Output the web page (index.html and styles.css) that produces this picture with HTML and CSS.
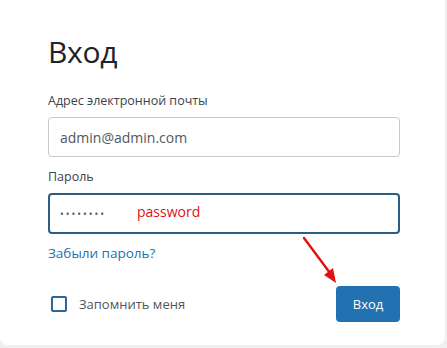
FILE: index.html
```html
<!DOCTYPE html>
<html lang="ru">
<head>
<meta charset="utf-8">
<link rel="stylesheet" href="styles.css">
</head>
<body>
<div class="card">
  <h1 class="title">Вход</h1>
  <form class="form">
    <label class="label" for="email">Адрес электронной почты</label>
    <input class="input" id="email" type="text" value="admin@admin.com">
    <label class="label label-pass" for="pass">Пароль</label>
    <div class="pass-wrap">
      <input class="input input-focus" id="pass" type="password" value="password">
      <span class="hint">password</span>
    </div>
    <a class="forgot" href="#">Забыли пароль?</a>
    <div class="bottom">
      <label class="remember"><span class="check"></span>Запомнить меня</label>
      <button class="btn" type="button">Вход</button>
    </div>
  </form>
  <svg class="arrow" width="40" height="50" viewBox="0 0 40 50">
    <line x1="4" y1="3" x2="30" y2="38" stroke="#e3100f" stroke-width="2.4" stroke-linecap="round"/>
    <polygon points="36,48 24,40 33,33" fill="#e3100f"/>
  </svg>
</div>
</body>
</html>
```
FILE: styles.css
```css
html, body {
  margin: 0;
  padding: 0;
  background: #f0f0f1;
}
body {
  width: 447px;
  height: 348px;
  overflow: hidden;
  font-family: "Open Sans", "Noto Sans", sans-serif;
}
.card {
  position: relative;
  box-sizing: border-box;
  width: 445px;
  height: 345px;
  background: #fff;
  border-radius: 0 0 8px 8px;
  padding: 32px 45px 0 48px;
}
.title {
  margin: 0;
  font-size: 30px;
  font-weight: 400;
  line-height: 40px;
  color: #1d2327;
  letter-spacing: -0.3px;
}
.form {
  display: flex;
  flex-direction: column;
  margin-top: 20px;
}
.label {
  font-size: 12.5px;
  line-height: 18px;
  color: #3c434a;
  margin-bottom: 7px;
}
.label-pass {
  margin-top: 11px;
}
.input {
  box-sizing: border-box;
  width: 352px;
  height: 40px;
  margin: 0;
  padding: 0 11px;
  border: 1px solid #c9c9c9;
  border-radius: 4px;
  font-family: inherit;
  font-size: 14px;
  color: #50575e;
  background: #fff;
  outline: none;
}
.input-focus {
  height: 41px;
  border: 2px solid #2c5d83;
  padding: 0 10px;
  letter-spacing: 2px;
  font-size: 10px;
  color: #50575e;
}
.pass-wrap {
  position: relative;
}
.hint {
  position: absolute;
  left: 89px;
  top: 9px;
  font-size: 14px;
  line-height: 20px;
  color: #e3100f;
}
.forgot {
  margin-top: 9px;
  font-size: 13.5px;
  line-height: 20px;
  color: #2271b1;
  text-decoration: none;
  align-self: flex-start;
}
.bottom {
  display: flex;
  align-items: center;
  justify-content: space-between;
  margin-top: 23px;
}
.remember {
  display: flex;
  align-items: center;
  font-size: 13px;
  color: #50575e;
  padding-left: 3px;
}
.check {
  box-sizing: border-box;
  width: 16px;
  height: 16px;
  border: 2px solid #2c6597;
  border-radius: 2px;
  margin-right: 12px;
}
.btn {
  width: 64px;
  height: 36px;
  border: none;
  border-radius: 4px;
  background: #2271b1;
  color: #fff;
  font-family: inherit;
  font-size: 13px;
  padding: 0;
}
.arrow {
  position: absolute;
  left: 300px;
  top: 235px;
}
```
